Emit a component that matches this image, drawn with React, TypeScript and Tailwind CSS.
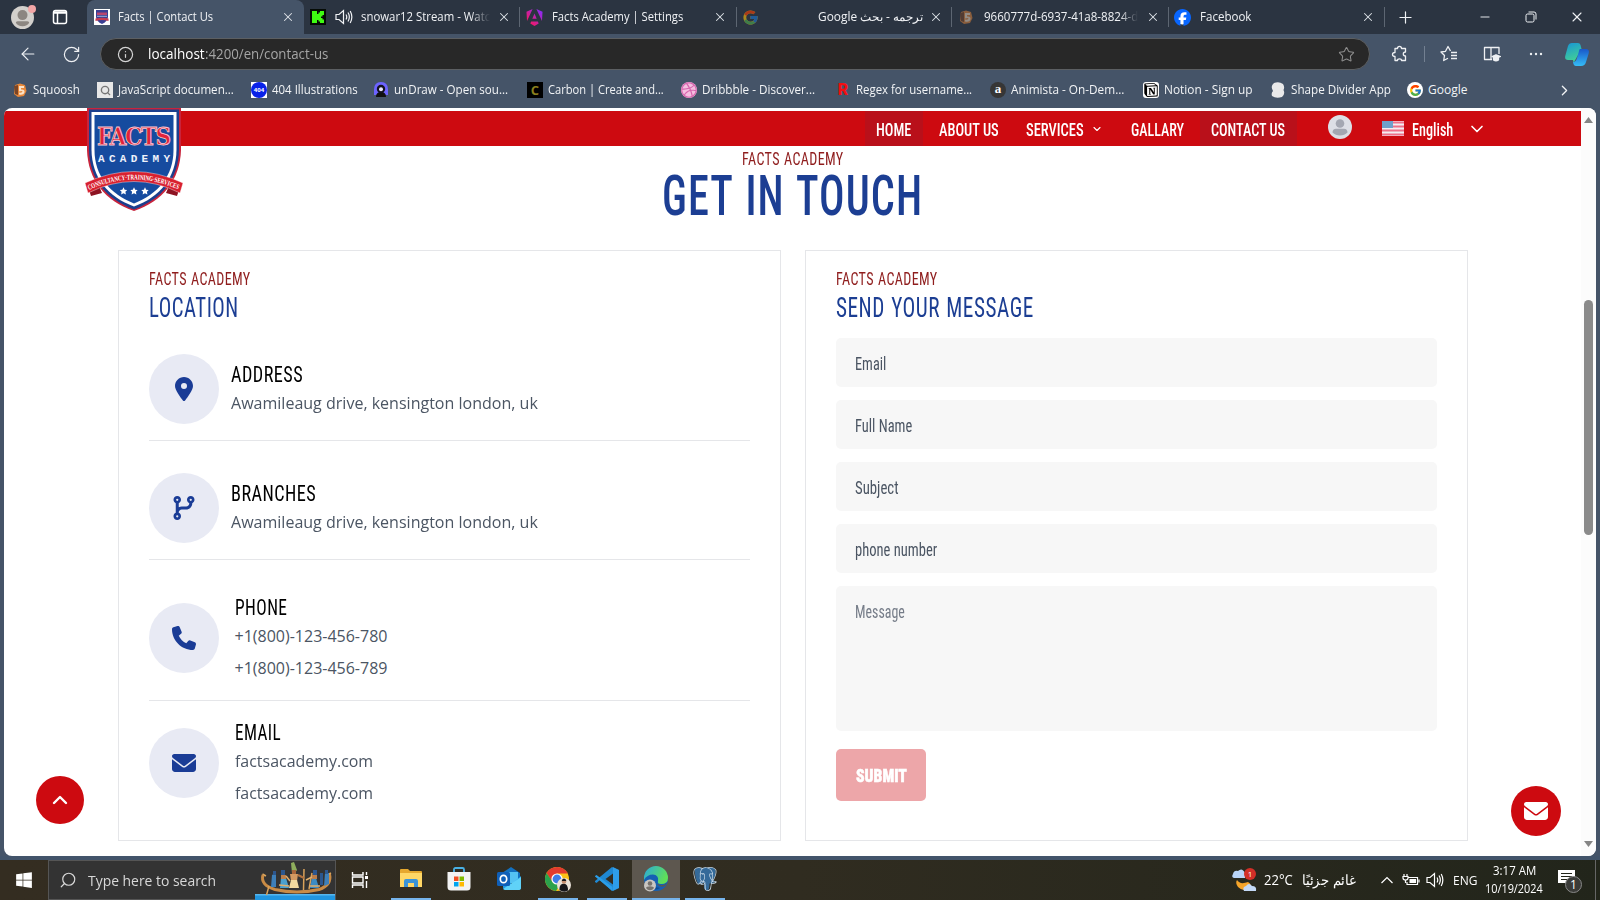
import { useLayoutEffect, useRef, type ReactNode } from "react";
import { FaLocationDot, FaCodeBranch, FaPhone, FaEnvelope, FaWindows, FaFacebook, FaDribbble } from "react-icons/fa6";
import { FcGoogle } from "react-icons/fc";
import { SiPostgresql, SiNotion, SiAngular } from "react-icons/si";
import { X, Plus, Minus, Star, ChevronDown, ChevronUp, ChevronRight, Info, ArrowLeft, RotateCw, Search } from "lucide-react";

/** Text scaled horizontally so that it takes exactly `w` pixels. */
function T({ w, children, className = "", rtl = false }: { w: number; children: ReactNode; className?: string; rtl?: boolean }) {
  const ref = useRef<HTMLSpanElement>(null);
  useLayoutEffect(() => {
    const el = ref.current;
    if (el && el.offsetWidth) el.style.transform = `scaleX(${w / el.offsetWidth})`;
  }, [w]);
  return (
    <span className={`inline-flex shrink-0 items-center whitespace-pre leading-[1.2] ${className}`} style={{ width: w }}>
      <span ref={ref} dir={rtl ? "rtl" : undefined} className="inline-block shrink-0 origin-left">
        {children}
      </span>
    </span>
  );
}

const NARROW = "font-['Roboto',sans-serif] [font-stretch:75%]";
const HEADING = "font-['Roboto',sans-serif] [font-stretch:75%] tracking-[0.025em] [word-spacing:0.04em]";

/* ---------- small drawings ---------- */

function Shield({ className }: { className: string }) {
  return (
    <svg viewBox="0 0 98 104" className={className}>
      <path d="M2 0H96V42C95 72 78 93 49 103C20 93 3 72 2 42Z" fill="#c8243c" />
      <path d="M4 1.500H94V42C93.500 71 77 91 49 101.500C21 91 4.500 71 4 42Z" fill="#1b3f8e" />
      <path d="M6.500 4H91.500V42C91 70 75 89 49 98.500C23 89 7 70 6.500 42Z" fill="#fff" />
      <path d="M9.500 7H88.500V42C88.500 68 73 86 49 95.500C25 86 9.500 68 9.500 42Z" fill="#164b9f" />
      <text x="49" y="36.500" textAnchor="middle" textLength="74" lengthAdjust="spacing" fontFamily="DejaVu Serif, serif" fontStretch="condensed" fontWeight="700" fontSize="24" fill="#e0233a" stroke="#f7c9d2" strokeWidth=".8">
        FACTS
      </text>
      <text x="49" y="54" textAnchor="middle" textLength="72" fontFamily="Liberation Mono, monospace" fontWeight="700" fontSize="11" fill="#eef2fb">A C A D E M Y</text>
      <path d="M4 82L6 88L17 85L14 78ZM94 82L92 88L81 85L84 78Z" fill="#8d1322" />
      <path d="M0 75Q49 52 98 75L95 85Q49 62 3 85Z" fill="#d8202f" stroke="#fff" strokeWidth=".4" />
      <path id="ribbon" d="M4 82Q49 61 94 82" fill="none" />
      <text fontFamily="Liberation Serif, serif" fontWeight="700" fontSize="7.200" fill="#fff">
        <textPath href="#ribbon" textLength="92" lengthAdjust="spacingAndGlyphs">CONSULTANCY·TRAINING·SERVICES</textPath>
      </text>
      {[38.500, 49, 60].map((x) => (
        <path key={x} transform={`translate(${x} 83)`} fill="#fff" d="M0-3.800L1.200-1.300L3.700-1L1.900 .8L2.400 3.400L0 2.200L-2.400 3.400L-1.900 .8L-3.700-1L-1.200-1.300Z" />
      ))}
    </svg>
  );
}

function MiniShield() {
  return (
    <svg viewBox="0 0 16 16" className="size-4">
      <path d="M0 0H16V16H0Z" fill="#fff" />
      <path d="M2 1H14V8Q13.500 12.500 8 15Q2.500 12.500 2 8Z" fill="#3a3f94" />
      <path d="M3 3.500H13V6H3Z" fill="#b8456f" />
      <path d="M3 7.300H13" stroke="#9fb3dd" />
      <path d="M1.500 9.500Q8 8 14.500 9.500V12Q8 10 1.500 12Z" fill="#c53a50" />
    </svg>
  );
}

function Person({ className }: { className: string }) {
  return (
    <svg viewBox="0 0 24 24" className={className}>
      <circle cx="12" cy="12" r="12" fill="#dcdfe6" />
      <circle cx="12" cy="8.500" r="4.300" fill="#a3a7b2" />
      <path d="M4.500 17.500Q4.500 13.700 8 13.700H16Q19.500 13.700 19.500 17.500Q16.500 20.500 12 20.500Q7.500 20.500 4.500 17.500Z" fill="#a3a7b2" />
    </svg>
  );
}

function ProfileFace() {
  return (
    <svg viewBox="0 0 24 24" className="size-[23px]">
      <circle cx="12" cy="12" r="12" fill="#d3d0cc" />
      <circle cx="12" cy="9.500" r="5.200" fill="#8c8681" />
      <path d="M5 17.500Q5 15.800 7 15.800H17Q19 15.800 19 17.500Q17 21 12 21Q7 21 5 17.500Z" fill="#8c8681" />
    </svg>
  );
}

function Speaker({ className }: { className: string }) {
  return (
    <svg viewBox="0 0 18 16" className={className} fill="none" stroke="currentColor" strokeWidth="1.200">
      <path d="M1 5.500H4L8.500 1.500V14.500L4 10.500H1ZM11 5.500Q12.500 8 11 10.500M13 3.500Q15.700 8 13 12.500M15.200 2Q18.500 8 15.200 14" />
    </svg>
  );
}

function Squoosh({ className = "" }: { className?: string }) {
  return (
    <svg viewBox="0 0 16 16" className={`size-4 ${className}`}>
      <path d="M3 3L8 1.500L13 3L14.500 9L12 14L6 15L2 12Z" fill="#e8883a" />
      <path d="M2 4L6 3V13L3 12Z" fill="#7a4526" />
      <path d="M7 4H12V6H9V7.500Q13 7 12.500 10.500Q11.500 13.500 7 12.500V10.500Q10.500 11 10.500 9.500Q10 8.500 7 9.500Z" fill="#fbe3c8" />
    </svg>
  );
}

function TabClose() {
  return <X className="size-[14px] shrink-0 text-[#dfe3e8]" strokeWidth={1.8} />;
}

function Sep() {
  return <span className="h-5 w-px shrink-0 bg-[#5d6672]" />;
}

/* ---------- browser chrome ---------- */

const UI = "font-['Open_Sans','Noto_Sans',sans-serif]";

function TabStrip() {
  return (
    <div className="flex h-[34px] items-center bg-[#2b3441] text-[12px] text-[#f0f2f5]">
      <div className="flex w-[87px] items-center pl-[11px]">
        <div className="relative size-[23px]">
          <ProfileFace />
          <span className="absolute -top-px -right-[2px] size-2 rounded-full bg-[#f3a6a6]" />
        </div>
        <svg viewBox="0 0 16 16" className="ml-[18px] size-4" fill="none" stroke="#fff" strokeWidth="1.500">
          <rect x="1.500" y="1.500" width="13" height="13" rx="2" />
          <path d="M2 3.500H14" strokeWidth="2.500" />
          <path d="M5.500 4V14" />
        </svg>
      </div>
      <div className="flex h-full w-[217px] items-center rounded-t-lg bg-[#455468] pl-[7px]">
        <MiniShield />
        <T w={95} className="ml-2">Facts | Contact Us</T>
        <span className="ml-[68px]"><TabClose /></span>
      </div>
      <div className="flex w-[215px] items-center pl-[6px]">
        <svg viewBox="0 0 16 16" className="size-4"><path d="M0 0H16V16H0Z" fill="#050b05" /><path d="M2 2H7V5H8.500V3.500H10V2H14V6H12.500V7.500H11V9H12.500V10.500H14V14H10V12.500H8.500V11H7V14H2Z" fill="#3ffb12" /></svg>
        <Speaker className="ml-[9px] h-4 w-[18px]" />
        <T w={129} className="ml-2 [mask-image:linear-gradient(to_right,black_85%,transparent)]">snowar12 Stream - Watc</T>
        <span className="ml-[7px]"><TabClose /></span>
      </div>
      <Sep />
      <div className="flex w-[216px] items-center pl-[6px]">
        <svg viewBox="0 0 24 24" className="size-[17px]">
          <defs><linearGradient id="ang" x1="0" y1="1" x2="1" y2="0"><stop offset=".2" stopColor="#f0196b" /><stop offset=".9" stopColor="#8b2bf5" /></linearGradient></defs>
          <SiAngular size={24} fill="url(#ang)" />
        </svg>
        <T w={131} className="ml-[9px]">Facts Academy | Settings</T>
        <span className="ml-[30px]"><TabClose /></span>
      </div>
      <Sep />
      <div className="flex w-[214px] items-center pl-[5px]">
        <FcGoogle className="size-[17px] opacity-60" />
        <T w={105} rtl className="ml-[59px]">ترجمه - بحث Google</T>
        <span className="ml-[6px]"><TabClose /></span>
      </div>
      <Sep />
      <div className="flex w-[216px] items-center pl-[6px]">
        <Squoosh className="opacity-50" />
        <T w={154} className="ml-[10px] [mask-image:linear-gradient(to_right,black_88%,transparent)]">9660777d-6937-41a8-8824-d</T>
        <span className="ml-[8px]"><TabClose /></span>
      </div>
      <Sep />
      <div className="flex w-[215px] items-center pl-[5px]">
        <svg viewBox="0 0 17 17" className="size-[17px]"><circle cx="8.500" cy="8.500" r="7" fill="#fff" /><FaFacebook size={17} fill="#0866ff" /></svg>
        <T w={51} className="ml-[9px]">Facebook</T>
        <span className="ml-[110px]"><TabClose /></span>
      </div>
      <Sep />
      <Plus className="ml-[11px] size-[19px]" strokeWidth={1.5} />
      <Minus className="ml-[63px] size-[14px]" strokeWidth={1.6} />
      <svg viewBox="0 0 12 12" className="ml-[33px] size-3" fill="none" stroke="currentColor"><rect x="1" y="3" width="8" height="8" rx="1.500" /><path d="M3.500 1H9Q11 1 11 3V8.500" /></svg>
      <X className="ml-[32px] size-4" strokeWidth={1.6} />
    </div>
  );
}

function Toolbar() {
  return (
    <div className="flex h-[40px] items-center text-[#eef0f3]">
      <ArrowLeft className="ml-[18px] size-5 shrink-0" strokeWidth={1.4} />
      <RotateCw className="ml-[24px] size-[19px] shrink-0" strokeWidth={1.5} />
      <div className="ml-[19px] flex h-[32px] w-[1270px] shrink-0 items-center rounded-full border border-[#5c5f62] bg-[#282828] text-[14px]">
        <Info className="ml-[16px] size-[17px] text-[#d5d5d5]" strokeWidth={1.7} />
        <T w={57} className="ml-[14px] pt-px text-white">localhost</T>
        <T w={123} className="pt-px text-[#a5a5a5]">:4200/en/contact-us</T>
        <Star className="ml-auto mr-[14px] size-[17px] text-[#8e8e8e]" strokeWidth={1.5} />
      </div>
      <svg viewBox="0 0 18 18" className="ml-[21px] size-[18px] shrink-0" fill="none" stroke="currentColor" strokeWidth="1.300">
        <path d="M4 3.500H6.500Q6.500 1.300 8.500 1.300T10.500 3.500H14.500V7Q12.300 7 12.300 9T14.500 11V15.500H10.500Q10.500 13.800 8.500 13.800T6.500 15.500H4V11.500Q1.500 11.500 1.500 9.500T4 7.500Z" strokeLinejoin="round" />
      </svg>
      <span className="ml-[15px] h-4 w-px bg-[#738091]" />
      <svg viewBox="0 0 18 18" className="ml-[15px] size-[18px] shrink-0" fill="none" stroke="currentColor" strokeWidth="1.300" strokeLinejoin="round">
        <path d="M10.500 6L8 1.500L5.500 6.300L1 7L4.500 10.500L3.700 15.500L8 13.200M11 7.500H17M11 10.500H17M11 13.500H17" />
      </svg>
      <svg viewBox="0 0 18 18" className="ml-[25px] size-[18px] shrink-0" fill="none" stroke="currentColor" strokeWidth="1.300" strokeLinejoin="round">
        <path d="M8 2.500H1.500V14.500H8ZM8 2.500H16V9M8 14.500H9" /><path d="M9 11.500L13 9.800L17.500 11.500L13 13.500Z" fill="currentColor" /><path d="M10.500 12.500V15Q13 16.500 15.500 15V12.500L13 13.500Z" fill="currentColor" />
      </svg>
      <svg viewBox="0 0 16 4" className="ml-[27px] h-1 w-4 shrink-0" fill="currentColor"><circle cx="3" cy="2" r="1.200" /><circle cx="8" cy="2" r="1.200" /><circle cx="13" cy="2" r="1.200" /></svg>
      <svg viewBox="0 0 24 24" className="ml-[21px] size-[24px] shrink-0">
        <defs>
          <linearGradient id="cpa" x1="0" y1="0" x2=".3" y2="1"><stop stopColor="#1894d6" /><stop offset="1" stopColor="#44d492" /></linearGradient>
          <linearGradient id="cpb" x1="0" y1="0" x2="0" y2="1"><stop stopColor="#1957c9" /><stop offset="1" stopColor="#35bdf7" /></linearGradient>
        </defs>
        <path d="M7 1H13Q15 1 15.500 3L16.500 7L9 20H12Q9 24 8 18H3Q-1 18 .5 13L3 4Q4 1 7 1Z" fill="url(#cpa)" />
        <path d="M15 7H21Q25 7 23.500 12L21 20Q20 24 16 24H11Q8.500 24 8 20Q11 20 12 16L14 9Q14.300 7 15 7Z" fill="url(#cpb)" />
      </svg>
    </div>
  );
}

function Bookmark({ icon, w, label, slot }: { icon: ReactNode; w: number; label: string; slot: number }) {
  return (
    <div className="flex shrink-0 items-center gap-[5px]" style={{ width: slot }}>
      <span className="flex size-4 shrink-0 items-center justify-center">{icon}</span>
      <T w={w}>{label}</T>
    </div>
  );
}

function Bookmarks() {
  return (
    <div className="flex h-[34px] items-center pb-[2px] pl-3 text-[12px] text-[#f2f4f6]">
      <Bookmark icon={<Squoosh />} w={47} slot={85} label="Squoosh" />
      <Bookmark icon={<span className="flex size-4 items-center justify-center bg-[#e8e8e8]"><Search className="size-[11px] text-[#777]" strokeWidth={3} /></span>} w={116} slot={154} label="JavaScript documen..." />
      <Bookmark icon={<span className="flex size-4 items-center justify-center bg-white"><span className="flex size-4 items-center justify-center rounded-full bg-[#0a22e8] text-[6px] font-bold text-white">404</span></span>} w={86} slot={122} label="404 Illustrations" />
      <Bookmark icon={<svg viewBox="0 0 16 16" className="size-4"><path d="M8 0Q15 0 15 7.500V13H1V7.500Q1 0 8 0Z" fill="#6c63ff" /><path d="M3 15Q3 10 8 10T13 15Z" fill="#111" /><circle cx="8" cy="7" r="4.200" fill="#14121f" /><circle cx="8" cy="7.300" r="2" fill="#e9e6ff" /></svg>} w={114} slot={154} label="unDraw - Open sou..." />
      <Bookmark icon={<span className="flex size-4 items-center justify-center bg-black text-[13px] leading-4 font-bold text-[#8a7f1e]">C</span>} w={116} slot={154} label="Carbon | Create and..." />
      <Bookmark icon={<span className="flex size-4 items-center justify-center rounded-full bg-[#f4bfe0]"><FaDribbble className="size-4 text-[#d765ae]" /></span>} w={113} slot={154} label="Dribbble - Discover..." />
      <Bookmark icon={<span className="font-['Roboto'] text-[16px] leading-5 font-black text-[#f50d10]">R</span>} w={116} slot={155} label="Regex for username..." />
      <Bookmark icon={<span className="flex size-4 items-center justify-center rounded-full bg-[#363636] pb-[3px] font-['Liberation_Serif'] text-[13px] font-bold text-white">a</span>} w={113} slot={153} label="Animista - On-Dem..." />
      <Bookmark icon={<span className="flex size-4 items-center justify-center rounded-[3px] bg-white"><SiNotion className="size-[14px] text-black" /></span>} w={89} slot={127} label="Notion - Sign up" />
      <Bookmark icon={<svg viewBox="0 0 16 16" className="size-4"><path d="M4 1Q9-1 13 2Q15 5 13.500 8Q15.500 12 12 15Q6 17 2 14Q1 11 3 9Q0 4 4 1Z" fill="#e9e9ea" /></svg>} w={100} slot={137} label="Shape Divider App" />
      <Bookmark icon={<span className="flex size-4 items-center justify-center rounded-full bg-white"><FcGoogle className="size-[13px]" /></span>} w={39} slot={149} label="Google" />
      <ChevronRight className="size-[17px]" strokeWidth={1.8} />
    </div>
  );
}

/* ---------- site ---------- */

function SiteHeader() {
  return (
    <header className="relative mt-[3px] flex h-[35px] w-[1577px] items-center bg-[#cd0a10] text-[18px] font-medium text-white">
      <Shield className="absolute -top-[3px] left-[81px] z-10 h-[104px] w-[98px]" />
      <nav className={`flex h-full items-center pl-[861px] ${NARROW}`}>
        <div className="flex h-full w-[58px] items-center bg-[#b9101a] pt-[2px] pl-[11px]"><T w={35}>HOME</T></div>
        <T w={60} className="ml-4 pt-[2px]">ABOUT US</T>
        <T w={58} className="ml-[27px] pt-[2px]">SERVICES</T>
        <ChevronDown className="ml-[7px] size-3" strokeWidth={2.2} />
        <T w={53} className="ml-[28px] pt-[2px]">GALLARY</T>
        <div className="ml-4 flex h-full w-[97px] items-center bg-[#b9101a] pt-[2px] pl-[11px]"><T w={74}>CONTACT US</T></div>
      </nav>
      <Person className="mb-1 ml-[31px] size-6" />
      <svg viewBox="0 0 22 15" className="ml-[30px] h-[15px] w-[22px]">
        <path d="M0 0H22V15H0Z" fill="#f3eef3" />
        <path d="M0 1.500H22M0 5.500H22M0 9.500H22M0 13.500H22" stroke="#ee6f88" strokeWidth="1.800" />
        <path d="M0 0H11V7H0Z" fill="#6f9fc9" />
      </svg>
      <T w={41} className={`ml-2 pt-[2px] ${NARROW}`}>English</T>
      <ChevronDown className="ml-[14px] size-5" strokeWidth={2} />
    </header>
  );
}

function CardHead({ title, w }: { title: string; w: number }) {
  return (
    <>
      <div className={`flex h-6 items-center text-[18.500px] text-[#8f1d1d] ${HEADING}`}><T w={101.500}>FACTS ACADEMY</T></div>
      <h2 className={`flex h-[33px] items-center text-[27.500px] text-[#1c3e93] ${HEADING}`}><T w={w}>{title}</T></h2>
    </>
  );
}

function Circle({ children }: { children: ReactNode }) {
  return <div className="flex size-[70px] shrink-0 items-center justify-center rounded-full bg-[#e8eaf4] text-2xl text-[#1a3c96]">{children}</div>;
}

function Place({ icon, title, w }: { icon: ReactNode; title: string; w: number }) {
  return (
    <div className="flex h-[87px] border-b border-[#e5e6e9]">
      <Circle>{icon}</Circle>
      <div className="ml-[11.500px] flex flex-col pt-[6px]">
        <h3 className={`flex h-[29px] items-center text-[22.500px] text-black ${HEADING}`}><T w={w}>{title}</T></h3>
        <p className="flex h-[29px] items-center text-base text-[#4b5563]"><T w={306.500}>Awamileaug drive, kensington london, uk</T></p>
      </div>
    </div>
  );
}

function Lines({ icon, title, w, lines, lw }: { icon: ReactNode; title: string; w: number; lines: string[]; lw: number }) {
  return (
    <div className="flex items-start">
      <div className="pt-[10px]"><Circle>{icon}</Circle></div>
      <div className="ml-[15.500px] flex flex-col">
        <h3 className={`flex h-[28px] items-center text-[22.500px] text-black ${HEADING}`}><T w={w}>{title}</T></h3>
        {lines.map((l, i) => (
          <p key={i} className="flex h-[33px] items-center text-base text-[#4b5563] first-of-type:h-[31px]"><T w={lw}>{l}</T></p>
        ))}
      </div>
    </div>
  );
}

const FIELDS = [
  { label: "Email", w: 31 },
  { label: "Full Name", w: 57 },
  { label: "Subject", w: 43.500 },
  { label: "phone number", w: 82.500 },
];

function Site() {
  return (
    <div className="relative mx-1 flex h-[748px] justify-between overflow-hidden rounded-lg bg-white">
      <div className="w-[1577px]">
        <SiteHeader />
        <div className={`flex h-[25px] items-center justify-center pt-px text-[18.500px] leading-none text-[#8f1d1d] ${HEADING}`}><T w={101.500} className="leading-none">FACTS ACADEMY</T></div>
        <h1 className={`flex h-[49px] items-center justify-center pt-px text-[55px] font-medium text-[#1c3e93] ${HEADING}`}><T w={261} className="leading-[0.8]">GET IN TOUCH</T></h1>
        <div className="mt-[30px] ml-[114px] flex gap-6">
          <section className="h-[591px] w-[663px] border border-[#e5e6e9] px-[30px] pt-4">
            <CardHead title="LOCATION" w={90} />
            <div className="mt-[30px]"><Place icon={<FaLocationDot />} title="ADDRESS" w={72} /></div>
            <div className="mt-8"><Place icon={<FaCodeBranch />} title="BRANCHES" w={85} /></div>
            <div className="mt-[33px] h-[108px] border-b border-[#e5e6e9]">
              <Lines icon={<FaPhone />} title="PHONE" w={52.500} lw={153} lines={["+1(800)-123-456-780", "+1(800)-123-456-789"]} />
            </div>
            <div className="mt-[17px]">
              <Lines icon={<FaEnvelope />} title="EMAIL" w={46.500} lw={138.500} lines={["factsacademy.com", "factsacademy.com"]} />
            </div>
          </section>
          <section className="h-[591px] w-[663px] border border-[#e5e6e9] px-[30px] pt-4">
            <CardHead title="SEND YOUR MESSAGE" w={197.500} />
            <div className={`mt-[14px] flex flex-col gap-[13px] text-[18px] text-[#4b5563] ${NARROW}`}>
              {FIELDS.map((f) => (
                <div key={f.label} className="flex h-[49px] items-center rounded-[5px] bg-[#f7f7f7] pt-[3px] pl-[19px]"><T w={f.w}>{f.label}</T></div>
              ))}
              <div className="flex h-[145px] items-start rounded-[5px] bg-[#f7f7f7] pt-[15px] pl-[19px] text-[#757c88]"><T w={49.500}>Message</T></div>
            </div>
            <div className={`mt-[18px] flex h-[52px] w-[90px] items-center justify-center rounded-[5px] bg-[#eda6a9] pt-px text-[18px] font-black text-white ${NARROW}`}><T w={51} className="[-webkit-text-stroke:0.5px_white]">SUBMIT</T></div>
          </section>
        </div>
      </div>
      <div className="flex w-[15px] flex-col items-center bg-[#fcfcfc] pt-[9px] pb-[9px]">
        <svg viewBox="0 0 9 6" className="h-[6px] w-[9px]"><path d="M4.500 0L9 6H0Z" fill="#858585" /></svg>
        <div className="mt-[177px] h-[235px] w-[9px] rounded-full bg-[#8a8a8a]" />
        <svg viewBox="0 0 9 6" className="mt-auto h-[6px] w-[9px]"><path d="M4.500 6L9 0H0Z" fill="#858585" /></svg>
      </div>
      <div className="absolute top-[668px] left-8 flex size-12 items-center justify-center rounded-full bg-[#cd0a10] text-white"><ChevronUp className="size-6" strokeWidth={2.4} /></div>
      <div className="absolute top-[678px] left-[1507px] flex size-[50px] items-center justify-center rounded-full bg-[#cd0a10] text-2xl text-white"><FaEnvelope /></div>
    </div>
  );
}

/* ---------- taskbar ---------- */

function TaskItem({ children, line = false, active = false, className }: { children: ReactNode; line?: boolean; active?: boolean; className: string }) {
  return (
    <div className={`flex h-10 shrink-0 flex-col items-center ${active ? "bg-[#5d574f]" : ""} ${className}`}>
      <div className="flex h-[38px] items-center">{children}</div>
      {line && <div className="h-[2px] w-full bg-[#76b4ec]" />}
    </div>
  );
}

function Boat() {
  return (
    <svg viewBox="0 0 80 39" className="h-[39px] w-20">
      <path d="M0 33H80V39H0Z" fill="#2196e0" />
      <path d="M0 33H80V34.500H0Z" fill="#56b6ee" />
      <path d="M8 14Q5 24 20 28.500Q42 33.500 64 28.500Q77 24 74.500 13" fill="none" stroke="#c98b45" strokeWidth="3" />
      <path d="M7.500 13L11 15M76 12L72 14M14 25L11.500 34M49 8L48.500 29M57 12L54 28" stroke="#d9a25a" strokeWidth="1.500" />
      <path d="M36 2L39 1L42 9L40 12H37Z" fill="#8fae5c" />
      <path d="M37 9H41V13H37Z" fill="#a8673b" />
      <path d="M35 13H43L42 20H36Z" fill="#d39a62" /><path d="M36 19H42L44 27H34Z" fill="#f1d9a0" />
      <path d="M43 14L49 17" stroke="#b0713f" strokeWidth="2" />
      <path d="M17 14L21 12V26H16ZM70 12H74V23L69 25Z" fill="#3e7fb8" />
      <path d="M26 17H31L34 27H25Z" fill="#4ba0cf" /><path d="M57 17H61L64 27H55Z" fill="#3c8cc4" />
      <path d="M26 9H30V14H26ZM58 9H62V14H58ZM65 12H68V24H65ZM18 10H21V14H18ZM70 9H73V13H70Z" fill="#2c578f" />
      <path d="M26 14H31V18H26ZM57 14H62V18H57Z" fill="#b97e4b" />
      <path d="M31 15L35 20M57 16L51 19M24 24L34 25M54 25H65" stroke="#e0ae6b" strokeWidth="1.500" />
    </svg>
  );
}

function Taskbar() {
  return (
    <div className="flex h-10 items-center overflow-hidden bg-linear-to-r from-[#342d21] via-[#302c20] to-[#22251b] text-white">
      <div className="flex w-12 shrink-0 items-center justify-center"><FaWindows className="size-[18px]" /></div>
      <div className="flex h-10 w-[288px] shrink-0 items-center border border-[#555] bg-[#333] text-[#d8d8d8]">
        <Search className="ml-[10px] size-[18px] -scale-x-100" strokeWidth={1.6} />
        <T w={128} className="ml-[11px] text-[15px]">Type here to search</T>
        <span className="ml-auto"><Boat /></span>
      </div>
      <svg viewBox="0 0 18 16" className="ml-[15px] h-4 w-[18px] shrink-0" fill="none" stroke="#fff" strokeWidth="1.400">
        <path d="M1.500 0V3H12V0M1.500 16V13H12V16M1.500 5H12V11H1.500ZM15.500 0V3M15.500 9V16" /><path d="M14 4H17V7H14Z" fill="#fff" stroke="none" />
      </svg>
      <TaskItem line className="ml-[22px] w-10">
        <svg viewBox="0 0 22 20" className="h-[20px] w-[22px]"><path d="M0 1Q0 0 1 0H8L10 2H21Q22 2 22 3V18H0Z" fill="#e6a82e" /><path d="M0 4H22V18H0Z" fill="#ffd766" /><path d="M4 18V12Q4 10 6 10H16Q18 10 18 12V18H14V14H8V18Z" fill="#3a93d8" /></svg>
      </TaskItem>
      <TaskItem className="ml-2 w-10">
        <svg viewBox="0 0 24 24" className="size-6"><path d="M7 6V2.500Q7 1 8.500 1H15.500Q17 1 17 2.500V6" fill="none" stroke="#49b1e5" strokeWidth="1.800" /><path d="M.5 5H23.500V20Q23.500 23.500 20 23.500H4Q.5 23.500 .5 20Z" fill="#f3f3f3" /><path d="M7 9.500H11.500V14H7Z" fill="#f25022" /><path d="M12.500 9.500H17V14H12.500Z" fill="#7fba00" /><path d="M7 15H11.500V19.500H7Z" fill="#00a4ef" /><path d="M12.500 15H17V19.500H12.500Z" fill="#ffb900" /></svg>
      </TaskItem>
      <TaskItem className="ml-[10px] w-10">
        <svg viewBox="0 0 24 24" className="size-6"><path d="M5 6L14 0L23 6V12H5Z" fill="#1270bf" /><path d="M8 5H21V16H8Z" fill="#54c3f3" /><path d="M6 11L15 17L24 9V20Q24 23 21 23H9Q6 23 6 20Z" fill="#1d9be8" /><path d="M6 22L24 10V21Q24 23 21 23H8Z" fill="#60d2f8" /><rect x="0" y="5" width="13" height="14" rx="1.500" fill="#0f5fb8" /><ellipse cx="6.500" cy="12" rx="3.200" ry="3.700" fill="none" stroke="#fff" strokeWidth="1.700" /></svg>
      </TaskItem>
      <TaskItem line className="ml-[9px] w-10">
        <svg viewBox="0 0 26 26" className="size-[26px]"><circle cx="12" cy="13" r="12" fill="#fbc116" /><path d="M12 7.500H22.700A12 12 0 0 0 1.600 7L7 16Z" fill="#e33b2e" /><path d="M1.600 7A12 12 0 0 0 11 25L16 17L7.500 16Z" fill="#2ba24c" /><circle cx="12" cy="13" r="5.600" fill="#fff" /><circle cx="12" cy="13" r="4.400" fill="#3f7de8" /><circle cx="19" cy="19" r="7" fill="#e9e1d8" /><path d="M14.500 24Q14 18 19 17.500Q23 18 23 24.500Q19 27 14.500 24Z" fill="#16161b" /><circle cx="19" cy="15.500" r="2.300" fill="#c58e70" /><path d="M16.700 15Q17 12.500 19 12.500T21.300 15Z" fill="#19191c" /></svg>
      </TaskItem>
      <TaskItem line className="ml-[9px] w-10">
        <svg viewBox="0 0 24 24" className="size-6"><path d="M17 0L24 3V21L17 24L5 13L1.500 16L0 15V14L17 0Z" fill="#1f88d2" /><path d="M0 9L1.500 8L17.500 20V24L0 9.500Z" fill="#2b9ee8" /><path d="M18 6.500V17.500L10.500 12Z" fill="#332d21" /><path d="M18 0L24 3V21L18 24Z" fill="#35a7f2" opacity=".7" /></svg>
      </TaskItem>
      <TaskItem line active className="ml-[5px] w-12">
        <svg viewBox="0 0 26 26" className="size-[26px]">
          <defs><linearGradient id="edg" x1="0" y1="0" x2="1" y2=".4"><stop stopColor="#2aa9dd" /><stop offset="1" stopColor="#5fdf58" /></linearGradient></defs>
          <circle cx="13" cy="13" r="12" fill="#1560b4" /><path d="M1 12A12 12 0 0 1 25 12Q25 18 18 18Q14 18 15 15Q16 9 10 8.500Q4 8.500 1 14Z" fill="url(#edg)" /><path d="M9 14Q9 21 17 22Q12 25 7 22Q4 18 9 14Z" fill="#0f4b94" /><path d="M15 18Q19 21 24 17L22 20Q17 22 14 18Z" fill="#5d574f" />
          <circle cx="7" cy="19.500" r="6" fill="#c9c6c2" /><circle cx="7" cy="17.500" r="2.300" fill="#77726d" /><path d="M3 22Q3.500 20.300 7 20.300T11 22Q9.500 24.300 7 24.300T3 22Z" fill="#77726d" />
        </svg>
      </TaskItem>
      <TaskItem line className="ml-[5px] w-10">
        <svg viewBox="0 0 24 24" className="size-6">
          <path d="M2 2Q6 0 9 1.500Q12 0 15 1Q20-.5 22.500 3Q23 8 20 13L22.500 14.500L19 16.500H16.500Q16.500 22 15 23.200Q11.500 24 11 21V16Q8 17.500 5 17Q1 10 2 2Z" fill="#356a99" />
          <SiPostgresql size={24} fill="#c7d8e6" />
        </svg>
      </TaskItem>
      <svg viewBox="0 0 26 26" className="ml-[506px] size-[26px] shrink-0">
        <path d="M6 13Q9 18 17 15Q22 18 18 22Q12 25 7 20Q4 16 6 13Z" fill="#f5a42a" />
        <path d="M3 11Q0 10 2 7Q3 3 7 4Q11 0 14 6V11Z" fill="#b9d4f8" />
        <path d="M13 24Q11 20 15 19Q18 15 21 19Q26 19 25 24Z" fill="#c3d9f6" />
        <circle cx="19" cy="7" r="6" fill="#d22f27" /><text x="19" y="10" textAnchor="middle" fontSize="8" fill="#fff">1</text>
      </svg>
      <T w={29} className="ml-[7px] pt-px text-[14px]">22°C</T>
      <T w={54} rtl className="ml-[9px] pt-px text-[14px]">غائم جزئيًا</T>
      <svg viewBox="0 0 12 8" className="ml-[25px] h-2 w-3 shrink-0" fill="none" stroke="#fff" strokeWidth="1.200"><path d="M.5 7L6 1.500L11.500 7" /></svg>
      <svg viewBox="0 0 18 14" className="ml-[9px] h-[14px] w-[18px] shrink-0" fill="none" stroke="#fff" strokeWidth="1.200"><path d="M6 4.500H15.500V11.500H5V9M17 6.500V9.500" /><path d="M7.500 6H14V10H7.500Z" fill="#fff" stroke="none" /><path d="M1 3.500H6V5Q6 7 3.500 7T1 5ZM2 1V3.500M5 1V3.500M3.500 7V10" /></svg>
      <Speaker className="ml-[6px] h-4 w-[18px] shrink-0" />
      <T w={24} className="ml-[9px] text-[12.500px]">ENG</T>
      <div className="ml-[7px] flex w-[60px] shrink-0 flex-col items-center gap-[3px] text-[12px]"><T w={43}>3:17 AM</T><T w={58}>10/19/2024</T></div>
      <div className="relative ml-[14px] h-5 w-[26px] shrink-0">
        <svg viewBox="0 0 17 17" className="size-[17px]"><path d="M0 0H17V13H13V16L10 13H0Z" fill="#fff" /><path d="M3 3.500H14M3 6.500H14M3 9.500H10" stroke="#22251b" strokeWidth="1.200" /></svg>
        <span className="absolute top-[6px] left-[7px] flex size-[17px] items-center justify-center rounded-full border border-[#888] bg-[#3a3b38] text-[12px]">1</span>
      </div>
      <div className="ml-auto h-10 w-px shrink-0 bg-[#666]" />
      <div className="w-1 shrink-0" />
    </div>
  );
}

export default function App() {
  return (
    <div className={`flex h-[900px] w-[1600px] flex-col overflow-hidden bg-[#455468] ${UI}`}>
      <TabStrip />
      <Toolbar />
      <Bookmarks />
      <Site />
      <div className="h-1 bg-[#42546a]" />
      <Taskbar />
    </div>
  );
}
